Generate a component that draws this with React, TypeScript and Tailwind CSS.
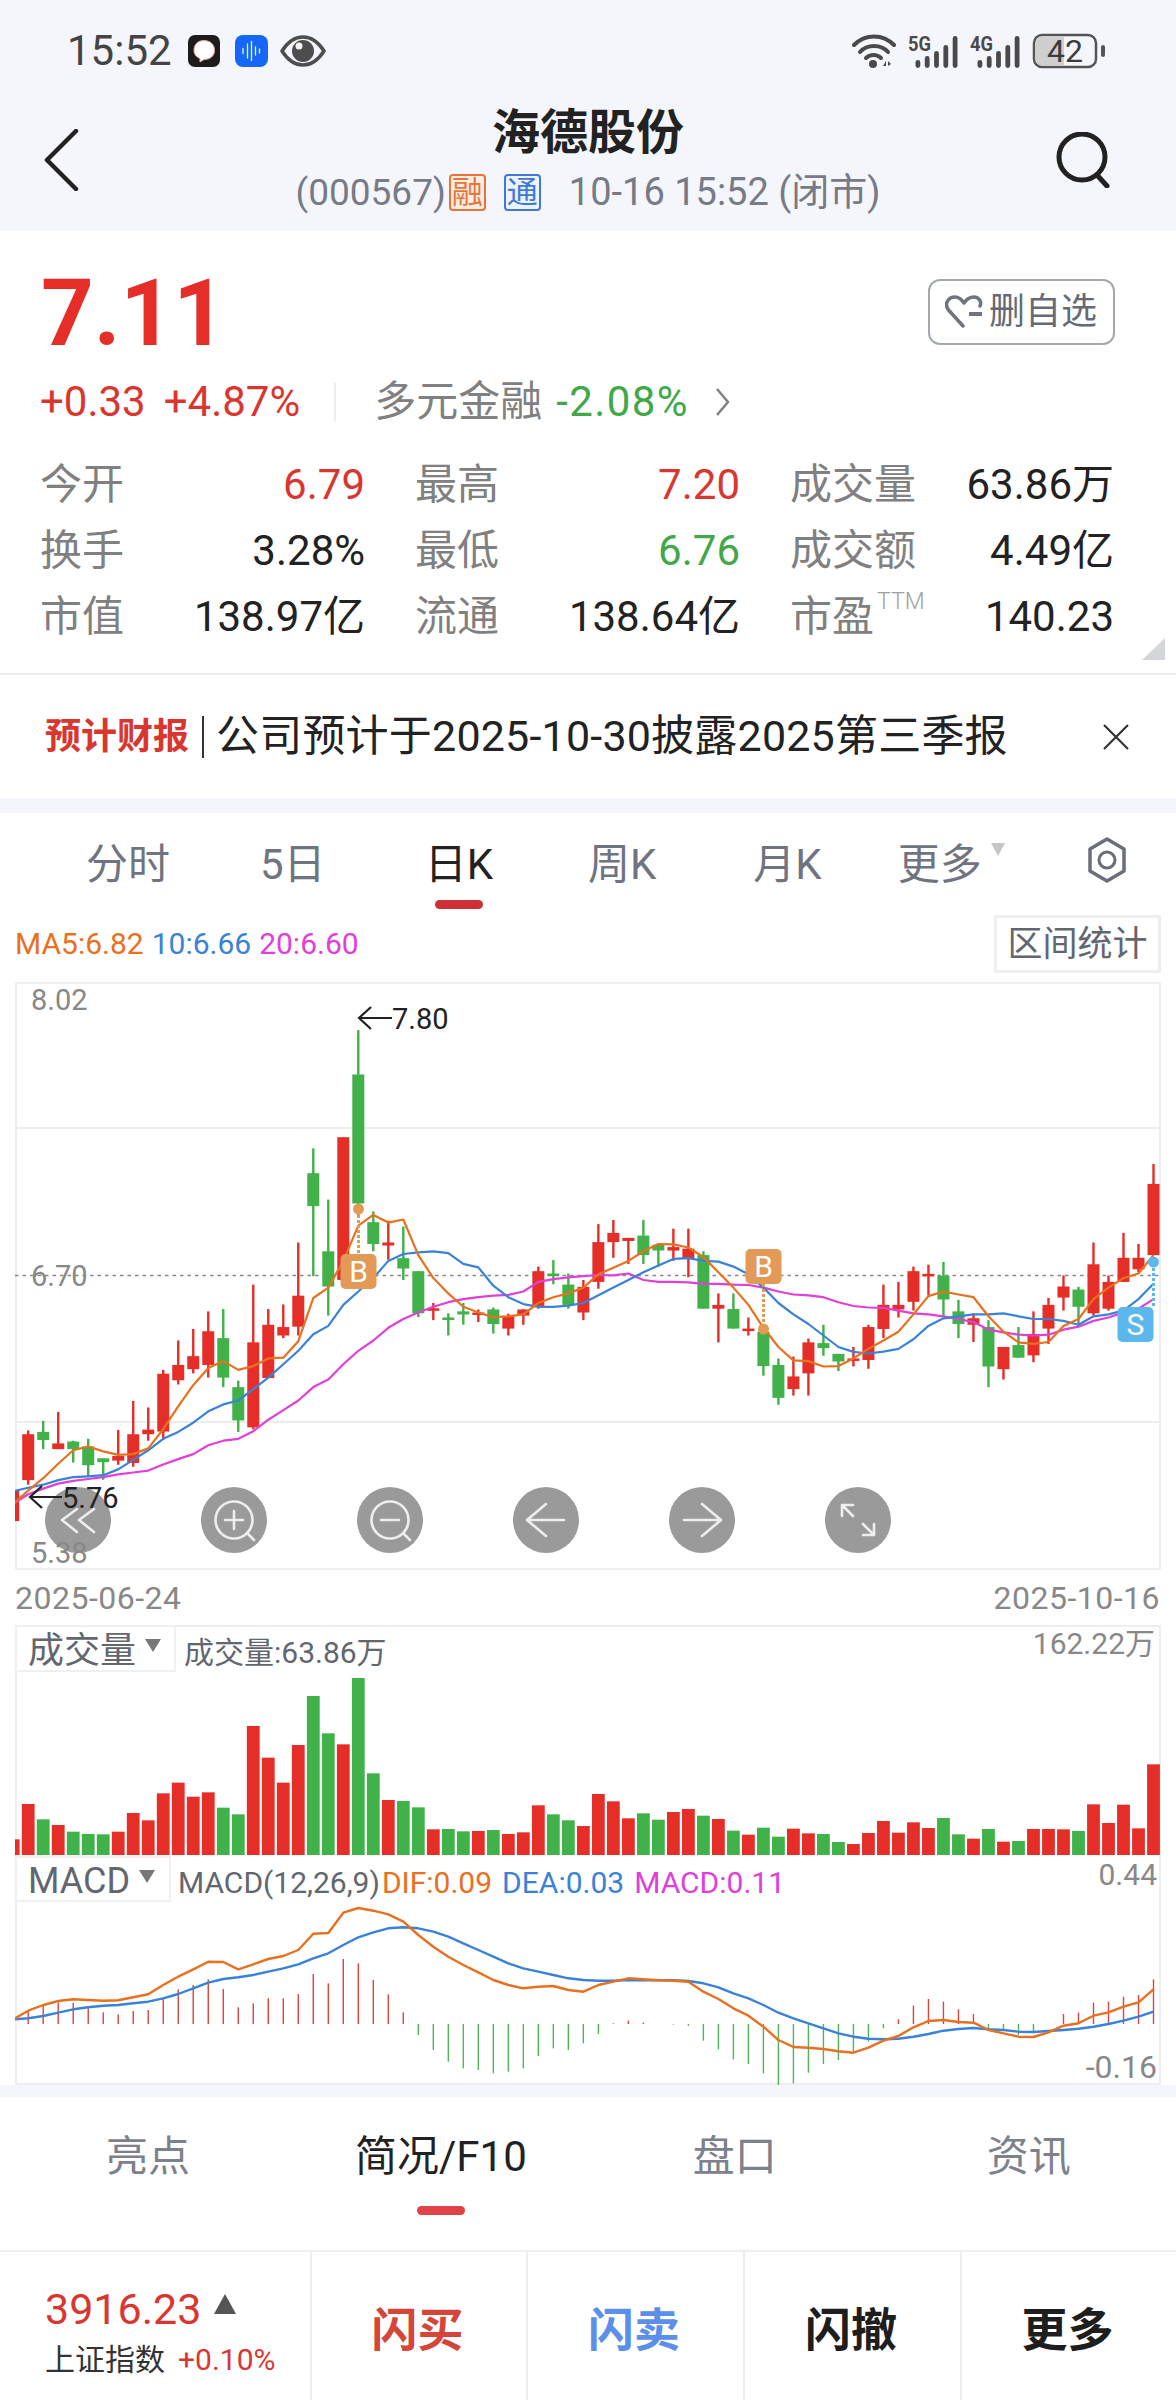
import React from "react";

const RED = "#e62e29";
const GREEN = "#41b14a";
const ORANGE = "#e8701e";
const BLUE = "#3a82d8";
const MAGENTA = "#e040d8";

// x of the n-th trading day, page pixels
const dayX = (i: number) => 13.2 + 15.004 * i;
// raw chart samples are stored on a finer vertical grid than the page
const priceY = (v: number) => 970 + v / 2.613;
const subY = (v: number) => 1570 + v / 3;

type Candle = ["r" | "g", number, number, number, number];

// colour, high, body top, body bottom, low
const candles: Candle[] = [
  ["r", 1360, 1360, 1440, 1440], ["r", 1203, 1213, 1333, 1345], ["g", 1178, 1207, 1228, 1252], ["r", 1155, 1237, 1252, 1252],
  ["g", 1230, 1232, 1252, 1287], ["g", 1225, 1245, 1294, 1325], ["g", 1276, 1276, 1286, 1332], ["r", 1202, 1270, 1282, 1293],
  ["r", 1126, 1213, 1288, 1298], ["r", 1143, 1201, 1213, 1230], ["r", 1045, 1055, 1206, 1228], ["r", 968, 1032, 1072, 1083],
  ["r", 938, 1009, 1043, 1054], ["r", 892, 944, 1032, 1065], ["g", 886, 962, 1065, 1090], ["g", 1073, 1090, 1177, 1207],
  ["r", 822, 973, 1195, 1200], ["r", 886, 927, 1066, 1066], ["r", 874, 933, 955, 962], ["r", 712, 851, 932, 955],
  ["g", 466, 531, 617, 800], ["g", 600, 735, 827, 903], ["r", 437, 437, 810, 810], ["g", 157, 273, 610, 640],
  ["g", 631, 659, 716, 735], ["r", 655, 712, 720, 757], ["g", 670, 753, 780, 810], ["g", 787, 787, 897, 907],
  ["r", 870, 884, 890, 915], ["g", 897, 908, 912, 955], ["g", 870, 892, 900, 927], ["r", 887, 895, 901, 920],
  ["g", 882, 887, 925, 950], ["r", 898, 904, 937, 955], ["r", 887, 887, 903, 927], ["r", 775, 787, 880, 885],
  ["g", 758, 793, 797, 821], ["g", 793, 822, 875, 885], ["r", 810, 828, 895, 915], ["r", 664, 711, 815, 833],
  ["r", 653, 687, 711, 752], ["r", 700, 700, 708, 768], ["g", 653, 694, 745, 768], ["g", 715, 718, 733, 775],
  ["r", 676, 724, 733, 760], ["r", 676, 728, 755, 803], ["g", 735, 745, 885, 885], ["r", 845, 875, 885, 973],
  ["g", 845, 886, 937, 937], ["r", 908, 937, 943, 955], ["g", 930, 945, 1035, 1060], ["g", 1015, 1032, 1118, 1136],
  ["r", 1010, 1062, 1095, 1112], ["r", 963, 973, 1054, 1112], ["g", 927, 975, 988, 1008], ["g", 1003, 1003, 1023, 1048],
  ["r", 985, 1015, 1021, 1036], ["r", 927, 933, 1019, 1042], ["r", 822, 875, 938, 962], ["r", 815, 875, 887, 908],
  ["r", 775, 787, 867, 890], ["r", 770, 794, 798, 850], ["g", 763, 799, 861, 905], ["g", 862, 892, 925, 962],
  ["r", 897, 910, 927, 972], ["g", 915, 933, 1036, 1090], ["r", 985, 985, 1043, 1070], ["g", 933, 980, 1013, 1013],
  ["r", 892, 951, 1007, 1025], ["r", 857, 875, 937, 977], ["r", 798, 827, 856, 890], ["g", 828, 835, 880, 930],
  ["r", 712, 769, 897, 903], ["r", 798, 815, 885, 890], ["r", 687, 752, 815, 815], ["r", 716, 752, 782, 790],
  ["r", 507, 559, 745, 745],
];

const ma5 = [1395, 1360, 1328, 1290, 1255, 1245, 1258, 1267, 1265, 1250, 1200, 1140, 1085, 1040, 1022, 1045, 1035, 1015, 1013, 970, 857, 830, 760, 668, 640, 660, 652, 745, 805, 845, 880, 895, 907, 905, 900, 870, 855, 845, 830, 795, 778, 760, 735, 716, 717, 725, 750, 790, 830, 875, 935, 985, 1020, 1022, 1036, 1035, 1015, 990, 968, 945, 900, 852, 840, 848, 855, 905, 945, 973, 977, 972, 930, 912, 860, 830, 805, 793, 745];
const ma10 = [1362, 1353, 1345, 1333, 1325, 1323, 1320, 1305, 1280, 1255, 1225, 1207, 1183, 1153, 1135, 1125, 1095, 1065, 1030, 995, 952, 930, 875, 840, 805, 760, 742, 738, 735, 740, 768, 777, 825, 855, 873, 880, 880, 877, 870, 850, 830, 810, 790, 772, 755, 753, 760, 762, 775, 795, 830, 870, 900, 925, 955, 985, 998, 1002, 997, 990, 965, 930, 910, 905, 900, 900, 897, 905, 912, 912, 917, 927, 905, 900, 890, 860, 820];
const ma20 = [1395, 1370, 1355, 1342, 1335, 1330, 1325, 1318, 1313, 1308, 1292, 1278, 1265, 1242, 1230, 1225, 1205, 1175, 1150, 1125, 1090, 1070, 1030, 995, 968, 935, 912, 895, 880, 868, 860, 855, 851, 849, 840, 815, 808, 803, 800, 797, 798, 793, 810, 815, 815, 816, 820, 820, 822, 823, 830, 840, 848, 850, 855, 868, 878, 882, 883, 890, 897, 900, 905, 912, 920, 940, 947, 953, 955, 953, 940, 932, 917, 908, 895, 885, 860];

const volumeTops = [808, 702, 748, 765, 785, 792, 793, 785, 729, 751, 670, 638, 680, 667, 713, 733, 468, 563, 638, 525, 378, 490, 523, 324, 610, 690, 693, 712, 778, 777, 784, 783, 780, 792, 787, 706, 733, 751, 768, 672, 694, 745, 730, 749, 726, 717, 737, 747, 782, 794, 773, 800, 776, 790, 792, 816, 822, 789, 753, 788, 757, 774, 744, 793, 806, 777, 815, 813, 777, 777, 778, 783, 703, 759, 704, 775, 583];

const dif = [1348, 1322, 1305, 1293, 1288, 1290, 1292, 1291, 1282, 1273, 1245, 1220, 1198, 1175, 1176, 1198, 1183, 1167, 1158, 1140, 1091, 1089, 1028, 1014, 1022, 1033, 1055, 1095, 1130, 1160, 1185, 1207, 1230, 1245, 1255, 1250, 1248, 1260, 1265, 1245, 1235, 1225, 1228, 1231, 1232, 1235, 1265, 1287, 1315, 1337, 1370, 1410, 1431, 1433, 1437, 1444, 1448, 1433, 1412, 1398, 1372, 1353, 1350, 1356, 1358, 1380, 1390, 1400, 1401, 1387, 1367, 1360, 1337, 1327, 1310, 1297, 1258];
const dea = [1348, 1345, 1338, 1328, 1318, 1312, 1307, 1305, 1300, 1295, 1285, 1272, 1255, 1238, 1227, 1222, 1215, 1205, 1195, 1183, 1165, 1150, 1125, 1102, 1087, 1075, 1072, 1075, 1085, 1100, 1120, 1140, 1160, 1180, 1195, 1205, 1215, 1225, 1230, 1232, 1232, 1230, 1231, 1231, 1231, 1233, 1240, 1252, 1270, 1285, 1305, 1328, 1345, 1360, 1375, 1390, 1400, 1406, 1408, 1406, 1400, 1392, 1382, 1377, 1374, 1378, 1380, 1385, 1386, 1383, 1380, 1376, 1370, 1362, 1352, 1340, 1325];
// histogram tips, zero axis is at 1362
const histogram = [1362, 1325, 1305, 1297, 1298, 1315, 1327, 1333, 1323, 1320, 1285, 1258, 1245, 1228, 1257, 1312, 1300, 1285, 1285, 1272, 1212, 1240, 1167, 1180, 1230, 1273, 1327, 1395, 1440, 1475, 1495, 1500, 1510, 1505, 1495, 1458, 1435, 1440, 1420, 1392, 1360, 1352, 1358, 1362, 1364, 1367, 1412, 1438, 1468, 1482, 1510, 1545, 1540, 1508, 1482, 1470, 1445, 1415, 1375, 1348, 1307, 1287, 1295, 1318, 1332, 1378, 1380, 1395, 1385, 1362, 1332, 1328, 1298, 1295, 1280, 1275, 1228];

function Line({ data, color, toY, width = 2.2 }: { data: number[]; color: string; toY: (v: number) => number; width?: number }) {
  const pts = data.map((v, i) => `${dayX(i).toFixed(1)},${toY(v).toFixed(1)}`).join(" ");
  return <polyline points={pts} fill="none" stroke={color} strokeWidth={width} strokeLinejoin="round" />;
}

function SignalBars({ label }: { label: string }) {
  const heights = [8, 12, 17, 23, 32];
  return (
    <svg width="52" height="44" viewBox="0 -6 52 44">
      <text x="0" y="16" fontSize="21" fontWeight="700" fill="#4a4a4a" textLength="23" lengthAdjust="spacingAndGlyphs">{label}</text>
      {heights.map((h, i) => (
        <rect key={i} x={7.5 + i * 9.3} y={33 - h} width="4.8" height={h} rx="2.4" fill="#4a4a4a" />
      ))}
    </svg>
  );
}

function StatusBar() {
  return (
    <div className="flex h-[100px] items-center pl-[67px] pt-[1px]">
      <span className="w-[121px] text-[42px] leading-none text-[#444]">15:52</span>
      {/* chat notification */}
      <svg width="32" height="32" viewBox="0 0 32 32">
        <rect width="32" height="32" rx="7" fill="#1c1c1c" />
        <path d="M16 5.500c6 0 10.500 3.800 10.500 9.800S22 24.500 16 24.500l-4 2.500v-3.500c-3.800-1.500-6-4.500-6-8.200C6 9.300 10 5.500 16 5.500z" fill="#fff" stroke="#e9a7a0" strokeWidth="1" />
      </svg>
      {/* voice recording */}
      <svg className="ml-[15px]" width="33" height="32" viewBox="0 0 33 32">
        <rect width="33" height="32" rx="8" fill="#1667f5" />
        <g stroke="#fff" strokeWidth="1.300" strokeLinecap="round" opacity="0.9">
          <path d="M8 13.500v5M12.500 9v14M16.500 6.500v19M20.500 12v8M24.500 14v4" />
        </g>
      </svg>
      {/* eye comfort */}
      <svg className="ml-[12px]" width="46" height="32" viewBox="0 0 46 32">
        <path d="M2 16C8 6.500 15 2 23 2s15 4.500 21 14c-6 9.500-13 14-21 14S8 25.500 2 16z" fill="none" stroke="#4d4d4d" strokeWidth="3.500" strokeLinejoin="round" />
        <circle cx="23" cy="16" r="11" fill="#4d4d4d" />
        <circle cx="19" cy="11" r="3.500" fill="#f4f6fb" />
      </svg>
      <div className="ml-auto flex items-center pr-[68px]">
        {/* wifi with up and down arrows */}
        <svg width="44" height="34" viewBox="0 0 44 34">
          <g fill="none" stroke="#4a4a4a" strokeWidth="4" strokeLinecap="round">
            <path d="M2 11C13 -0.500 31 -0.500 42 11" />
            <path d="M8 18C15 10 29 10 36 18" />
            <path d="M14 24C18 20 25 20 29 24" />
          </g>
          <circle cx="21" cy="30" r="4" fill="#4a4a4a" />
          <path d="M31 32l3-5v5zM36 27l3 3-3 2z" fill="#4a4a4a" />
        </svg>
        <div className="ml-[12px]"><SignalBars label="5G" /></div>
        <div className="ml-[10px]"><SignalBars label="4G" /></div>
        {/* battery */}
        <svg className="ml-[10px]" width="76" height="36" viewBox="0 0 76 36">
          <rect x="2" y="2" width="62" height="32" rx="8" fill="#f4f6fb" stroke="#555" strokeWidth="2.500" />
          <path d="M3.500 10a6.500 6.500 0 0 1 6.500-6.500h22v29H10a6.500 6.500 0 0 1-6.500-6.500z" fill="#cfcfcf" />
          <text x="33" y="29" textAnchor="middle" fontSize="32" fill="#3c3c3c">42</text>
          <rect x="69" y="12" width="4" height="12" rx="2" fill="#555" />
        </svg>
      </div>
    </div>
  );
}

function Badge({ text, tone }: { text: string; tone: "orange" | "blue" }) {
  const cls = tone === "orange"
    ? "border-[#e8743a] text-[#e8743a] bg-[#fdeee4]"
    : "border-[#3f78d6] text-[#3f78d6] bg-[#edf3fd]";
  return (
    <span className={`flex h-[37px] w-[37px] items-center justify-center rounded-[4px] border-2 text-[31px] leading-none ${cls}`}>
      {text}
    </span>
  );
}

function Header() {
  return (
    <header className="h-[231px] shrink-0 bg-[#f4f6fb]">
      <StatusBar />
      <div className="flex items-start">
        <div className="w-[200px] pl-[44px] pt-[29px]">
          <svg width="36" height="62" viewBox="0 0 36 62">
            <path d="M32 2 3 31l29 29" fill="none" stroke="#222" strokeWidth="4.500" strokeLinecap="round" strokeLinejoin="round" />
          </svg>
        </div>
        <div className="flex-1 pt-[3px] text-center">
          <div className="text-[48px] font-bold leading-[60px] text-[#222]">海德股份</div>
          <div className="mt-[7px] flex h-[44px] items-center justify-center text-[38px] leading-none text-[#767b85]">
            <span className="text-[37px]">(000567)</span>
            <span className="ml-[3px]"><Badge text="融" tone="orange" /></span>
            <span className="ml-[18px]"><Badge text="通" tone="blue" /></span>
            <span className="ml-[28px]">10-16 15:52 (闭市)</span>
          </div>
        </div>
        <div className="flex w-[200px] justify-end pr-[66px] pt-[32px]">
          <svg width="54" height="56" viewBox="0 0 54 56">
            <circle cx="26" cy="25" r="23" fill="none" stroke="#222" strokeWidth="5" />
            <path d="M41 43l10 11" stroke="#222" strokeWidth="5" strokeLinecap="round" />
          </svg>
        </div>
      </div>
    </header>
  );
}

const stats: { label: string; value: string; color: string; sup?: string }[] = [
  { label: "今开", value: "6.79", color: "text-[#d9362f]" },
  { label: "最高", value: "7.20", color: "text-[#d9362f]" },
  { label: "成交量", value: "63.86万", color: "text-[#222]" },
  { label: "换手", value: "3.28%", color: "text-[#222]" },
  { label: "最低", value: "6.76", color: "text-[#41a84a]" },
  { label: "成交额", value: "4.49亿", color: "text-[#222]" },
  { label: "市值", value: "138.97亿", color: "text-[#222]" },
  { label: "流通", value: "138.64亿", color: "text-[#222]" },
  { label: "市盈", value: "140.23", color: "text-[#222]", sup: "TTM" },
];

function QuoteCard() {
  return (
    <section className="relative h-[442px] shrink-0 bg-white">
      <div className="flex items-start justify-between pl-[41px] pr-[61px] pt-[37px]">
        <span className="text-[92px] font-bold leading-none text-[#e62e29]">7.11</span>
        <button className="mt-[11px] flex h-[66px] w-[187px] items-center rounded-[12px] border-2 border-[#a3a8af] pl-[15px] text-[36px] text-[#656a74]">
          <svg width="40" height="34" viewBox="0 0 40 34">
            <path d="M18 31 3.500 15C-1 9 3 2 10 2c4 0 7 3 9 6 2-3 5-6 10-6 5 0 8 5 6 9" fill="none" stroke="#6f747e" strokeWidth="3.500" strokeLinecap="round" strokeLinejoin="round" />
            <path d="M24 19h13" stroke="#6f747e" strokeWidth="4" />
          </svg>
          <span className="ml-[4px] leading-none">删自选</span>
        </button>
      </div>
      <div className="mt-[17px] flex h-[50px] items-center pl-[40px] text-[42px] leading-none">
        <span className="text-[#d9362f]">+0.33</span>
        <span className="ml-[18px] text-[#d9362f]">+4.87%</span>
        <span className="ml-[34px] h-[38px] w-[2px] bg-[#eeeeee]" />
        <span className="ml-[38px] text-[#808080]">多元金融</span>
        <span className="ml-[14px] tracking-[1.400px] text-[#41a84a]">-2.08%</span>
        <svg className="ml-[26px]" width="16" height="30" viewBox="0 0 16 30">
          <path d="M2 2l11 13L2 28" fill="none" stroke="#808080" strokeWidth="2.500" />
        </svg>
      </div>
      <div className="mt-[25px] grid grid-cols-[325px_325px_324px] gap-x-[50px] pl-[40px] text-[42px] leading-none">
        {stats.map(s => (
          <div key={s.label} className="flex h-[66px] items-center justify-between">
            <span className="relative text-[#808080]">
              {s.label}
              {s.sup && <sup className="absolute left-full top-[-6px] ml-[3px] text-[23px] font-light leading-none text-[#a0a0a0]">{s.sup}</sup>}
            </span>
            <span className={s.color}>{s.value}</span>
          </div>
        ))}
      </div>
      {/* expand corner */}
      <svg className="absolute bottom-[13px] right-[11px]" width="23" height="22" viewBox="0 0 23 22">
        <path d="M23 0v22H0z" fill="#d4d6da" />
      </svg>
    </section>
  );
}

function Notice() {
  return (
    <div className="flex h-[125px] shrink-0 items-center border-t-2 border-[#eeeff1] bg-white pl-[45px] pr-[46px]">
      <span className="text-[36px] font-bold leading-none text-[#d9362f]">预计财报</span>
      <span className="ml-[13px] h-[42px] w-[2px] bg-[#333]" />
      <span className="ml-[12px] text-[43px] leading-none tracking-[0.200px] text-[#222]">公司预计于2025-10-30披露2025第三季报</span>
      <svg className="ml-auto" width="28" height="28" viewBox="0 0 28 28">
        <path d="M2 2l24 24M26 2 2 26" stroke="#333" strokeWidth="2.200" />
      </svg>
    </div>
  );
}

function KlineTabs() {
  const tabs = [
    { label: "分时", ml: "ml-0" },
    { label: "5日", ml: "ml-[90px]" },
    { label: "日K", ml: "ml-[99px]", active: true },
    { label: "周K", ml: "ml-[95px]" },
    { label: "月K", ml: "ml-[97px]" },
    { label: "更多", ml: "ml-[76px]" },
  ];
  return (
    <div className="flex h-[102px] items-start pl-[86px] pr-[49px] pt-[28px] text-[42px] leading-[48px]">
      {tabs.map(t => (
        <div key={t.label} className={`flex flex-col items-center ${t.ml} ${t.active ? "text-[#222]" : "text-[#6f7480]"}`}>
          <span>{t.label}</span>
          {t.active && <span className="mt-[11px] h-[9px] w-[48px] rounded-full bg-[#cf3036]" />}
        </div>
      ))}
      <svg className="ml-[9px] mt-[2px]" width="14" height="13" viewBox="0 0 14 13">
        <path d="M0 0h14L7 13z" fill="#c4c6ca" />
      </svg>
      <svg className="ml-auto mt-[-4px]" width="40" height="46" viewBox="0 0 40 46">
        <path d="M20 2 37 12v22L20 44 3 34V12z" fill="none" stroke="#6a6e78" strokeWidth="3.500" strokeLinejoin="round" />
        <circle cx="20" cy="23" r="8" fill="none" stroke="#6a6e78" strokeWidth="3" />
      </svg>
    </div>
  );
}

function Tag({ x, top, label, color }: { x: number; top: number; label: string; color: string }) {
  return (
    <g>
      <rect x={x} y={top} width="36" height="35" rx="5" fill={color} />
      <text x={x + 18} y={top + 28} textAnchor="middle" fontSize="30" fill="#fff">{label}</text>
    </g>
  );
}

function PriceChart() {
  return (
    <svg className="relative block" width="1146" height="588" viewBox="15 982 1146 588">
      <rect x="16" y="983" width="1144" height="586" fill="none" stroke="#eeeeee" strokeWidth="2" />
      <path d="M15 1128h1146M15 1422h1146" stroke="#ececec" strokeWidth="2" />
      <path d="M15 1275.500h1146" stroke="#888" strokeWidth="1.500" strokeDasharray="3.500 4" />
      <g fontSize="29" fill="#888">
        <text x="31" y="1010">8.02</text>
        <text x="31" y="1286">6.70</text>
        <text x="31" y="1563">5.38</text>
      </g>
      {candles.map(([c, high, top, bottom, low], i) => {
        const x = dayX(i);
        const fill = c === "r" ? RED : GREEN;
        const h = Math.max((bottom - top) / 2.613, 2.5);
        return (
          <g key={i} fill={fill}>
            <rect x={x - 1.2} y={priceY(high)} width="2.400" height={(low - high) / 2.613} />
            <rect x={x - 6} y={priceY(top)} width="12" height={h} />
          </g>
        );
      })}
      <Line data={ma20} color={MAGENTA} toY={priceY} />
      <Line data={ma10} color={BLUE} toY={priceY} />
      <Line data={ma5} color={ORANGE} toY={priceY} />

      {/* buy and sell markers */}
      <path d="M358.500 1215v46" stroke="#e39a56" strokeWidth="3" strokeDasharray="3 2" />
      <circle cx="358.500" cy="1209" r="5.500" fill="#e39a56" />
      <Tag x={340.500} top={1254} label="B" color="#e39a56" />
      <path d="M763.500 1284v40" stroke="#e39a56" strokeWidth="3" strokeDasharray="3 2" />
      <circle cx="763.500" cy="1329" r="5.500" fill="#e39a56" />
      <Tag x={745.500} top={1249} label="B" color="#e39a56" />
      <path d="M1153.500 1268v39" stroke="#5cb8ec" strokeWidth="3" strokeDasharray="3 2" />
      <circle cx="1153.500" cy="1262" r="5.500" fill="#5cb8ec" />
      <Tag x={1117.500} top={1307} label="S" color="#5cb8ec" />

      {/* extreme price labels */}
      <path d="M392 1018h-33m12-11-12 11 12 11" fill="none" stroke="#222" strokeWidth="2.200" />
      <text x="392" y="1029" fontSize="29" fill="#222">7.80</text>
      <path d="M62 1497H30m12-11-12 11 12 11" fill="none" stroke="#222" strokeWidth="2.200" />
      <text x="62" y="1508" fontSize="29" fill="#222">5.76</text>
    </svg>
  );
}

function ChartControls() {
  const common = { fill: "none", stroke: "#eeeeee", strokeWidth: 2.6, strokeLinecap: "round" as const, strokeLinejoin: "round" as const };
  const icons = [
    <g {...common}><path d="M-1-11-16 0-1 12M16-11 1 0 16 12" /></g>,
    <g {...common}><circle r="18.500" /><path d="M13 13l7 7M-9 0H9M0-9V9" /></g>,
    <g {...common}><circle r="18.500" /><path d="M13 13l7 7M-9 0H9" /></g>,
    <g {...common}><path d="M18 0h-37M0-16-19 0 0 16" /></g>,
    <g {...common}><path d="M-18 0h37M0-16 19 0 0 16" /></g>,
    <g {...common}><path d="M-16-15-5-4M-16-4v-11h11M16 15 5 4M16 4v11H5" /></g>,
  ];
  return (
    <div className="absolute left-[30px] top-[505px] flex gap-[90px]">
      {icons.map((icon, i) => (
        <div key={i} className="h-[66px] w-[66px] rounded-full bg-[#9a9a9a]">
          <svg width="66" height="66" viewBox="-33 -33 66 66">{icon}</svg>
        </div>
      ))}
    </div>
  );
}

function VolumeChart() {
  return (
    <svg className="block" width="1146" height="230" viewBox="15 1625 1146 230">
      <path d="M16 1855v-229h1144v229" fill="none" stroke="#eeeeee" strokeWidth="2" />
      {volumeTops.map((t, i) => {
        const up = candles[i][0] === "r";
        return <rect key={i} x={dayX(i) - 6.400} y={subY(t)} width="12.800" height={(855 - t) / 3} fill={up ? RED : GREEN} />;
      })}
    </svg>
  );
}

function MacdChart() {
  return (
    <svg className="block" width="1146" height="230" viewBox="15 1855 1146 230">
      <path d="M16 1855v229h1144v-229" fill="none" stroke="#eeeeee" strokeWidth="2" />
      {histogram.map((tip, i) => (
        tip === 1362 ? null : (
          <rect
            key={i}
            x={dayX(i) - 0.7}
            y={subY(Math.min(tip, 1362))}
            width="1.400"
            height={Math.abs(tip - 1362) / 3}
            fill={tip < 1362 ? "#d9453f" : "#52b35a"}
          />
        )
      ))}
      <Line data={dea} color={BLUE} toY={subY} width={2.4} />
      <Line data={dif} color={ORANGE} toY={subY} width={2.4} />
    </svg>
  );
}

function PaneSelect({ label, w, h }: { label: string; w: string; h: string }) {
  return (
    <div className={`flex ${w} ${h} items-center border-2 border-[#eef0f2] bg-white pl-[11px] pt-[4px] text-[36px] leading-none text-[#62666f]`}>
      <span>{label}</span>
      <svg className="ml-[9px] mb-[10px]" width="16" height="13" viewBox="0 0 16 13">
        <path d="M0 0h16L8 13z" fill="#777" />
      </svg>
    </div>
  );
}

function ChartCard() {
  return (
    <section className="mt-[15px] h-[1272px] shrink-0 bg-white">
      <KlineTabs />
      <div className="flex h-[58px] items-center justify-between pl-[15px] pr-[15px] text-[30px] leading-none">
        <div className="flex">
          <span className="text-[#e8701e]">MA5:6.82</span>
          <span className="ml-[8px] text-[#3a82d8]">10:6.66</span>
          <span className="ml-[8px] text-[#e040d8]">20:6.60</span>
        </div>
        <span className="flex h-[58px] w-[167px] items-center justify-center border-[3px] border-[#eceef0] text-[35px] text-[#62666f]">区间统计</span>
      </div>
      <div className="relative ml-[15px] mt-[9px] h-[588px] w-[1146px]">
        <ChartControls />
        <PriceChart />
      </div>
      <div className="flex h-[55px] items-center justify-between pl-[15px] pr-[16px] text-[32px] leading-none tracking-[0.500px] text-[#888]">
        <span>2025-06-24</span>
        <span>2025-10-16</span>
      </div>
      <div className="relative ml-[15px] h-[230px] w-[1146px]">
        <VolumeChart />
        <div className="absolute left-0 top-0 flex items-center">
          <PaneSelect label="成交量" w="w-[161px]" h="h-[47px]" />
          <span className="ml-[8px] pt-[8px] text-[30px] leading-none text-[#62666f]">成交量:63.86万</span>
        </div>
        <span className="absolute right-[6px] top-[4px] text-[30px] leading-none text-[#888]">162.22万</span>
      </div>
      <div className="relative ml-[15px] h-[230px] w-[1146px]">
        <MacdChart />
        <div className="absolute left-0 top-[1px] flex items-center">
          <PaneSelect label="MACD" w="w-[156px]" h="h-[46px]" />
          <div className="ml-[7px] flex pt-[8px] text-[30px] leading-none">
            <span className="text-[#62666f]">MACD(12,26,9)</span>
            <span className="ml-[2px] text-[#e8701e]">DIF:0.09</span>
            <span className="ml-[10px] text-[#3a82d8]">DEA:0.03</span>
            <span className="ml-[10px] text-[#e040d8]">MACD:0.11</span>
          </div>
        </div>
        <span className="absolute right-[4px] top-[5px] text-[30px] leading-none text-[#888]">0.44</span>
        <span className="absolute right-[4px] top-[196px] text-[32px] leading-none text-[#888]">-0.16</span>
      </div>
    </section>
  );
}

function BottomTabs() {
  const tabs = [
    { label: "亮点", ml: "ml-0" },
    { label: "简况/F10", ml: "ml-[165px]", active: true },
    { label: "盘口", ml: "ml-[166px]" },
    { label: "资讯", ml: "ml-[210px]" },
  ];
  return (
    <div className="mt-[12px] flex h-[153px] shrink-0 items-start bg-white pl-[106px] pt-[36px] text-[42px] leading-[48px]">
      {tabs.map(t => (
        <div key={t.label} className={`flex flex-col items-center ${t.ml} ${t.active ? "text-[#222]" : "text-[#7c818b]"}`}>
          <span>{t.label}</span>
          {t.active && <span className="mt-[25px] h-[9px] w-[48px] rounded-full bg-[#e0424a]" />}
        </div>
      ))}
    </div>
  );
}

function BottomBar() {
  const actions = [
    { label: "闪买", color: "text-[#d4463a]", w: "w-[216px]" },
    { label: "闪卖", color: "text-[#5b8fe8]", w: "w-[217px]" },
    { label: "闪撤", color: "text-[#1e1e1e]", w: "w-[217px]" },
    { label: "更多", color: "text-[#1e1e1e]", w: "w-[216px]" },
  ];
  return (
    <div className="flex h-[150px] shrink-0 border-t-2 border-[#eeeeee] bg-white">
      <div className="w-[310px] pl-[45px] pt-[32px]">
        <div className="flex items-start">
          <span className="text-[43px] leading-[50px] text-[#d9362f]">3916.23</span>
          <svg className="ml-[13px] mt-[10px]" width="22" height="20" viewBox="0 0 22 20">
            <path d="M11 0l11 20H0z" fill="#555" />
          </svg>
        </div>
        <div className="mt-[6px] flex items-center leading-[40px]">
          <span className="text-[30px] text-[#333]">上证指数</span>
          <span className="ml-[13px] text-[30px] text-[#d9362f]">+0.10%</span>
        </div>
      </div>
      {actions.map(a => (
        <div key={a.label} className={`flex ${a.w} items-center justify-center border-l-2 border-[#eeeeee] pr-[3px] pt-[8px] text-[46px] font-bold leading-none ${a.color}`}>
          {a.label}
        </div>
      ))}
    </div>
  );
}

export default function App() {
  return (
    <div className="flex h-[2400px] w-[1176px] flex-col overflow-hidden bg-[#f4f6fb] font-['Roboto','Noto_Sans_CJK_SC',sans-serif]">
      <Header />
      <QuoteCard />
      <Notice />
      <ChartCard />
      <BottomTabs />
      <BottomBar />
    </div>
  );
}
